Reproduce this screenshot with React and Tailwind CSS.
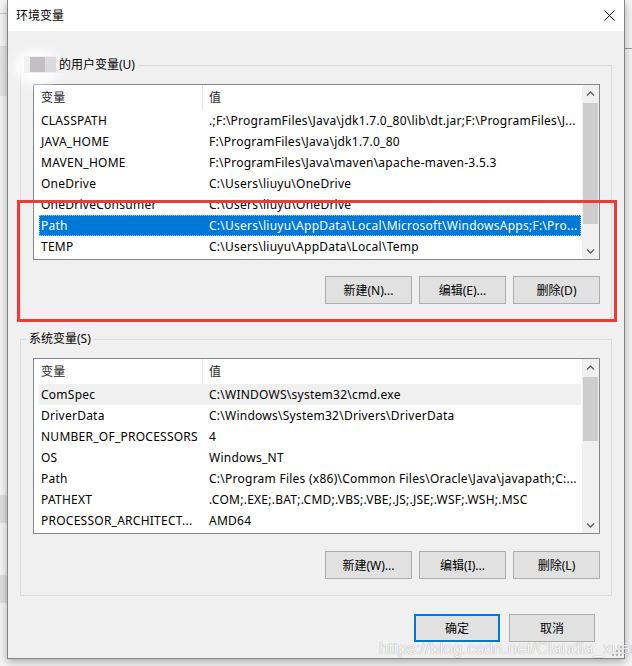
import React from 'react';

const userVars = [
  ['CLASSPATH', '.;F:\\ProgramFiles\\Java\\jdk1.7.0_80\\lib\\dt.jar;F:\\ProgramFiles\\J...'],
  ['JAVA_HOME', 'F:\\ProgramFiles\\Java\\jdk1.7.0_80'],
  ['MAVEN_HOME', 'F:\\ProgramFiles\\Java\\maven\\apache-maven-3.5.3'],
  ['OneDrive', 'C:\\Users\\liuyu\\OneDrive'],
  ['OneDriveConsumer', 'C:\\Users\\liuyu\\OneDrive'],
  ['Path', 'C:\\Users\\liuyu\\AppData\\Local\\Microsoft\\WindowsApps;F:\\Pro...'],
  ['TEMP', 'C:\\Users\\liuyu\\AppData\\Local\\Temp'],
];

const sysVars = [
  ['ComSpec', 'C:\\WINDOWS\\system32\\cmd.exe'],
  ['DriverData', 'C:\\Windows\\System32\\Drivers\\DriverData'],
  ['NUMBER_OF_PROCESSORS', '4'],
  ['OS', 'Windows_NT'],
  ['Path', 'C:\\Program Files (x86)\\Common Files\\Oracle\\Java\\javapath;C:...'],
  ['PATHEXT', '.COM;.EXE;.BAT;.CMD;.VBS;.VBE;.JS;.JSE;.WSF;.WSH;.MSC'],
  ['PROCESSOR_ARCHITECT...', 'AMD64'],
];

const Chevron = ({ down }) => (
  <svg width="9" height="6" viewBox="0 0 9 6">
    <path
      d={down ? 'M1 1.5 L4.5 5 L8 1.5' : 'M1 4.5 L4.5 1 L8 4.5'}
      fill="none"
      stroke="#606060"
      strokeWidth="1.4"
    />
  </svg>
);

const Scrollbar = ({ thumb }) => (
  <div className="flex w-[17px] shrink-0 flex-col bg-[#f0f0f0]">
    <div className="flex h-[17px] items-center justify-center">
      <Chevron />
    </div>
    <div className="flex-1">
      <div className={`mx-[1px] bg-[#cdcdcd] ${thumb}`} />
    </div>
    <div className="flex h-[17px] items-center justify-center">
      <Chevron down />
    </div>
  </div>
);

const VarList = ({ rows, selected, hovered, thumb }) => (
  <div className="flex h-[176px] border border-[#828790] bg-white">
    <div className="min-w-0 flex-1 tracking-[0.25px]">
      {/* header */}
      <div className="flex h-[25px] items-center text-[#1e1e1e]">
        <div className="flex h-full w-[169px] items-center border-r border-[#e5e5e5] pl-[7px]">变量</div>
        <div className="pl-[6px]">值</div>
      </div>
      {rows.map(([name, value], i) => {
        const isSel = i === selected;
        const isHover = i === hovered;
        return (
          <div
            key={name + i}
            className={
              isSel
                ? 'ml-[5px] mr-[1px] flex h-[21px] items-center bg-[#0078d7] text-white outline-1 -outline-offset-1 outline-dotted outline-[#9cc9f0]'
                : isHover
                ? 'ml-[5px] mr-[1px] flex h-[21px] items-center bg-[#f0f0f0] text-black'
                : 'ml-[5px] mr-[1px] flex h-[21px] items-center text-black'
            }
          >
            <div className="w-[163px] shrink-0 overflow-hidden whitespace-nowrap pl-[2px]">{name}</div>
            <div className="overflow-hidden whitespace-nowrap pl-[7px]">{value}</div>
          </div>
        );
      })}
    </div>
    <Scrollbar thumb={thumb} />
  </div>
);

const Btn = ({ children, w = 'w-[87px]' }) => (
  <button className={`flex h-[28px] ${w} items-center justify-center border border-[#adadad] bg-[#e1e1e1] text-black`}>
    {children}
  </button>
);

export default function App() {
  return (
    <div className="relative h-[666px] w-[632px] overflow-hidden bg-[#f4f4f4] font-['Noto_Sans','Noto_Sans_CJK_SC',sans-serif] text-[12px] leading-[17px]">
      {/* desktop scraps behind the window */}
      <div className="absolute left-0 top-[13px] h-px w-[7px] bg-[#c8c8c8]" />
      <div className="absolute left-0 top-[46px] h-[50px] w-[7px] bg-[#e2e2e2]" />
      <div className="absolute left-0 top-[495px] h-[28px] w-[7px] bg-[#dedede]" />
      <div className="absolute left-0 top-[575px] h-[28px] w-[7px] bg-[#dedede]" />
      <div className="absolute right-0 top-[48px] h-px w-[8px] bg-[#9a9a9a]" />

      {/* dialog */}
      <div className="relative ml-[7px] flex h-[659px] w-[618px] flex-col border-x border-b border-[#858585] bg-[#f0f0f0] shadow-[0_3px_8px_rgba(0,0,0,0.3)]">
        {/* title bar */}
        <div className="flex h-[31px] shrink-0 items-center justify-between bg-white pl-[8px] pr-[9px] text-black">
          <span>环境变量</span>
          <svg width="11" height="11" viewBox="0 0 11 11">
            <path d="M0.5 0.5 L10.5 10.5 M10.5 0.5 L0.5 10.5" stroke="#111" strokeWidth="1" />
          </svg>
        </div>

        {/* user variables */}
        <div className="relative mx-[12px] mt-[34px] border border-[#dcdcdc] pb-[16px] pl-[12px] pr-[11px] pt-[18px]">
          <div className="absolute -left-[6px] -top-[16px] h-[34px] w-[44px] rounded-full bg-white opacity-90 blur-[4px]" />
          <div className="absolute left-[3px] -top-[10px] flex h-[17px] items-center bg-[#f0f0f0] pr-[3px]">
            <div className="relative ml-[6px] flex h-[15px] w-[26px] blur-[0.6px]">
              <div className="h-full w-[15px] bg-[#c4bfc6]" />
              <div className="h-full w-[11px] bg-[#dcd9dc]" />
            </div>
            <span className="pl-[3px] text-black">的用户变量(U)</span>
          </div>
          <VarList rows={userVars} selected={5} thumb="mt-[1px] h-[121px]" />
          <div className="mt-[16px] flex justify-end gap-[7px]">
            <Btn>新建(N)...</Btn>
            <Btn>编辑(E)...</Btn>
            <Btn>删除(D)</Btn>
          </div>
        </div>

        {/* system variables */}
        <div className="relative mx-[12px] mt-[18px] border border-[#dcdcdc] pb-[16px] pl-[12px] pr-[11px] pt-[18px]">
          <div className="absolute left-[5px] -top-[10px] flex h-[17px] items-center bg-[#f0f0f0] px-[3px] text-black">
            系统变量(S)
          </div>
          <VarList rows={sysVars} hovered={0} thumb="mt-[1px] h-[64px]" />
          <div className="mt-[17px] flex justify-end gap-[7px]">
            <Btn>新建(W)...</Btn>
            <Btn>编辑(I)...</Btn>
            <Btn>删除(L)</Btn>
          </div>
        </div>

        {/* OK / Cancel */}
        <div className="mr-[29px] mt-[18px] flex justify-end gap-[9px]">
          <button className="flex h-[28px] w-[86px] items-center justify-center border-2 border-[#0078d7] bg-[#e1e1e1] text-black">
            确定
          </button>
          <Btn w="w-[86px]">取消</Btn>
        </div>

        {/* resize grip */}
        <svg className="absolute bottom-[2px] right-[2px]" width="10" height="10" viewBox="0 0 10 10">
          {[[8, 0], [8, 4], [4, 4], [8, 8], [4, 8], [0, 8]].map(([x, y]) => (
            <rect key={`${x}-${y}`} x={x} y={y} width="2" height="2" fill="#b8b8b8" />
          ))}
        </svg>
      </div>

      {/* annotation box */}
      <div className="absolute left-[17px] top-[200px] h-[122px] w-[600px] border-[3px] border-[#f03a3a]" />

      {/* watermark */}
      <div className="absolute left-[379px] top-[640px] whitespace-nowrap font-['Liberation_Sans',Arial,sans-serif] text-[17px] leading-[17px] text-white/90 [text-shadow:0_0_1px_rgba(0,0,0,0.45)]">
        https://blog.csdn.net/Claudia_xuan
      </div>
    </div>
  );
}
